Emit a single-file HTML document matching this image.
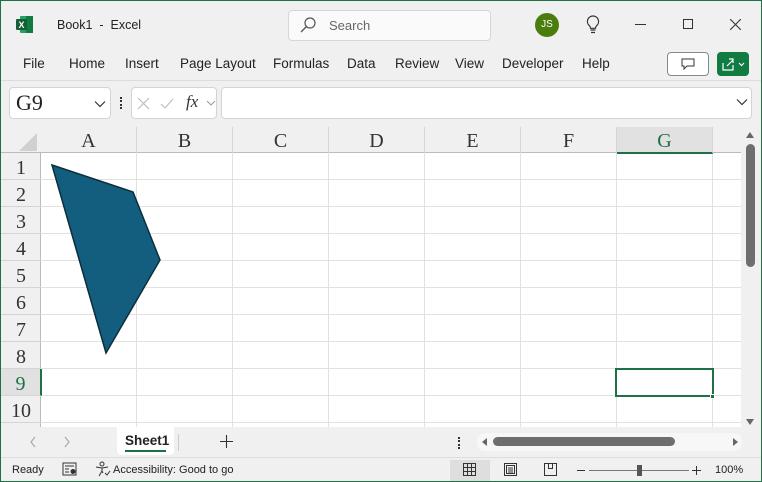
<!DOCTYPE html>
<html><head><meta charset="utf-8"><style>
*{margin:0;padding:0;box-sizing:border-box}
body{width:762px;height:482px;overflow:hidden;background:#f0f0f0;font-family:"Liberation Sans",sans-serif;position:relative}
.a{position:absolute}
.menu span{position:absolute;top:56px;font-size:13.5px;color:#222}
.ch{position:absolute;top:127px;height:26px;width:96px;text-align:center;font:20px "Liberation Serif",serif;color:#333;line-height:28px;border-right:1px solid #d4d4d4}
.rh{position:absolute;left:1px;width:40px;height:27px;text-align:center;font:20px "Liberation Serif",serif;color:#333;line-height:31px;border-bottom:1px solid #d4d4d4}
</style></head><body>
<div class="a" style="left:0;top:0;width:762px;height:482px;border:1px solid #1e7145;z-index:10;pointer-events:none"></div>
<svg class="a" style="left:16px;top:16px" width="18" height="17"><rect x="4" y="0" width="13" height="17" rx="1" fill="#21a366"/><rect x="10" y="0" width="7" height="17" fill="#107c41"/><rect x="0" y="3" width="11" height="11" rx="1" fill="#185c37"/><text x="2.5" y="12" font-size="9" font-weight="bold" fill="#fff" font-family="Liberation Sans">X</text></svg>
<div class="a" style="left:57px;top:18px;font-size:12.5px;color:#222">Book1&nbsp; - &nbsp;Excel</div>
<div class="a" style="left:288px;top:10px;width:203px;height:31px;background:#fafafa;border:1px solid #d6d6d6;border-radius:4px"></div>
<svg class="a" style="left:300px;top:17px" width="16" height="16"><circle cx="10" cy="6" r="5" fill="none" stroke="#555" stroke-width="1.2"/><path d="M6.5 9.5L1 15" stroke="#555" stroke-width="1.3"/></svg>
<div class="a" style="left:329px;top:18px;font-size:13px;color:#666">Search</div>
<div class="a" style="left:535px;top:13px;width:24px;height:24px;border-radius:50%;background:#4a7d0e;color:#fff;font-size:10px;text-align:center;line-height:24px">JS</div>
<svg class="a" style="left:585px;top:15px" width="16" height="20"><path d="M8 1a5.5 5.5 0 0 0-3.5 9.8c.8.8 1 1.5 1 2.5h5c0-1 .2-1.7 1-2.5A5.5 5.5 0 0 0 8 1z" fill="none" stroke="#333" stroke-width="1.2"/><path d="M5.5 15h5M6 17.5h4" stroke="#333" stroke-width="1.2"/></svg>
<div class="a" style="left:635px;top:24px;width:11px;height:1px;background:#333"></div>
<div class="a" style="left:683px;top:19px;width:10px;height:10px;border:1px solid #333"></div>
<svg class="a" style="left:730px;top:19px" width="11" height="11"><path d="M0 0L11 11M11 0L0 11" stroke="#333" stroke-width="1.1"/></svg>
<div class="menu"><span style="left:23px">File</span><span style="left:69px">Home</span><span style="left:125px">Insert</span><span style="left:180px">Page Layout</span><span style="left:273px">Formulas</span><span style="left:347px">Data</span><span style="left:395px">Review</span><span style="left:455px">View</span><span style="left:502px">Developer</span><span style="left:582px">Help</span></div>
<div class="a" style="left:667px;top:52px;width:42px;height:24px;background:#fff;border:1px solid #888;border-radius:4px"></div>
<svg class="a" style="left:681px;top:58px" width="14" height="12"><path d="M1 1h12v7H6l-3 3V8H1z" fill="none" stroke="#333" stroke-width="1"/></svg>
<div class="a" style="left:717px;top:52px;width:32px;height:24px;background:#107c41;border-radius:4px"></div>
<svg class="a" style="left:721px;top:57px" width="26" height="14"><path d="M2 6v7h10V8M6 9l6-6M8 2h4v4" fill="none" stroke="#fff" stroke-width="1.2"/><path d="M18 6l2.5 2.5L23 6" fill="none" stroke="#fff" stroke-width="1.2"/></svg>
<div class="a" style="left:1px;top:80px;width:760px;height:1px;background:#dcdcdc"></div>
<div class="a" style="left:9px;top:87px;width:102px;height:32px;background:#fff;border:1px solid #d4d4d4;border-radius:4px"></div>
<div class="a" style="left:16px;top:90px;font:22px 'Liberation Serif',serif;color:#222">G9</div>
<svg class="a" style="left:94px;top:100px" width="12" height="8"><path d="M1 1.5l5 5 5-5" fill="none" stroke="#333" stroke-width="1.2"/></svg>
<div class="a" style="left:120px;top:97px;width:2px;height:12px;border-left:2px dotted #333"></div>
<div class="a" style="left:131px;top:87px;width:86px;height:32px;background:#fff;border:1px solid #d4d4d4;border-radius:4px"></div>
<svg class="a" style="left:137px;top:97px" width="80" height="14"><path d="M1 1l11 11M12 1L1 12" stroke="#bbb" stroke-width="1.1"/><path d="M24 7l4 4 8-9" fill="none" stroke="#bbb" stroke-width="1.1"/><path d="M70 4l4 4 4-4" fill="none" stroke="#999" stroke-width="1"/></svg>
<div class="a" style="left:186px;top:92px;font:italic 17px 'Liberation Serif',serif;color:#333">fx</div>
<div class="a" style="left:221px;top:87px;width:531px;height:32px;background:#fff;border:1px solid #d4d4d4;border-radius:4px"></div>
<svg class="a" style="left:736px;top:98px" width="12" height="8"><path d="M1 1.5l5 5 5-5" fill="none" stroke="#333" stroke-width="1.2"/></svg>
<div class="a" style="left:1px;top:127px;width:740px;height:300px;background:#fff"></div>
<div class="a" style="left:1px;top:127px;width:740px;height:26px;background:#f0f0f0;border-bottom:1px solid #bbb"></div>
<div class="a" style="left:1px;top:153px;width:40px;height:274px;background:#f0f0f0;border-right:1px solid #bbb"></div>
<svg class="a" style="left:18px;top:132px" width="20" height="20"><path d="M19 1V19H1z" fill="#d0d0d0"/></svg>
<svg class="a" style="left:41px;top:153px" width="700" height="274">
<g stroke="#e1e1e1" stroke-width="1">
<path d="M95.5 0v274M191.5 0v274M287.5 0v274M383.5 0v274M479.5 0v274M575.5 0v274M671.5 0v274"/>
<path d="M0 26.5h700M0 53.5h700M0 80.5h700M0 107.5h700M0 134.5h700M0 161.5h700M0 188.5h700M0 215.5h700M0 242.5h700M0 269.5h700"/>
</g></svg>
<div class="ch" style="left:41px">A</div><div class="ch" style="left:137px">B</div><div class="ch" style="left:233px">C</div><div class="ch" style="left:329px">D</div><div class="ch" style="left:425px">E</div><div class="ch" style="left:521px">F</div><div class="ch" style="left:617px;background:#e1e1e1;color:#1e7145;border-bottom:2px solid #1e7145;height:27px">G</div>
<div class="ch" style="left:713px;width:28px;border:0"></div>
<div class="rh" style="top:153px">1</div><div class="rh" style="top:180px">2</div><div class="rh" style="top:207px">3</div><div class="rh" style="top:234px">4</div><div class="rh" style="top:261px">5</div><div class="rh" style="top:288px">6</div><div class="rh" style="top:315px">7</div><div class="rh" style="top:342px">8</div><div class="rh" style="top:369px;background:#e1e1e1;color:#1e7145;border-right:2px solid #1e7145;width:41px">9</div><div class="rh" style="top:396px">10</div>
<div class="a" style="left:615px;top:368px;width:99px;height:29px;border:2px solid #1e7145"></div>
<div class="a" style="left:710px;top:394px;width:5px;height:5px;background:#1e7145;border:1px solid #fff"></div>
<svg class="a" style="left:0;top:0" width="200" height="400"><polygon points="52,165 133,192 160,260 106,353" fill="#135e7e" stroke="#0c2e3d" stroke-width="1.5"/></svg>
<div class="a" style="left:741px;top:127px;width:20px;height:300px;background:#f0f0f0"></div>
<svg class="a" style="left:745px;top:131px" width="10" height="8"><path d="M1 7L5 1 9 7z" fill="#666"/></svg>
<div class="a" style="left:746px;top:144px;width:9px;height:123px;background:#6e6e6e;border-radius:5px"></div>
<svg class="a" style="left:745px;top:418px" width="10" height="8"><path d="M1 1L5 7 9 1z" fill="#666"/></svg>
<div class="a" style="left:1px;top:427px;width:760px;height:31px;background:#f0f0f0;border-bottom:1px solid #ddd"></div>
<svg class="a" style="left:28px;top:435px" width="45" height="14"><path d="M7 2L3 7l4 5M37 2l4 5-4 5" fill="none" stroke="#aaa" stroke-width="1.2"/></svg>
<div class="a" style="left:117px;top:427px;width:57px;height:28px;background:#fff;border-radius:0 0 4px 4px"></div>
<div class="a" style="left:125px;top:433px;font-size:13.5px;font-weight:bold;color:#222">Sheet1</div>
<div class="a" style="left:125px;top:450px;width:41px;height:2px;background:#1e7145"></div>
<div class="a" style="left:178px;top:434px;width:1px;height:17px;background:#ccc"></div>
<svg class="a" style="left:220px;top:435px" width="13" height="13"><path d="M6.5 0v13M0 6.5h13" stroke="#333" stroke-width="1.1"/></svg>
<div class="a" style="left:458px;top:437px;width:2px;height:12px;border-left:2px dotted #333"></div>
<div class="a" style="left:477px;top:433px;width:265px;height:18px;background:#f7f7f7;border-radius:8px"></div>
<svg class="a" style="left:480px;top:437px" width="260" height="10"><path d="M7 1L2 5l5 4zM253 1l5 4-5 4z" fill="#666"/></svg>
<div class="a" style="left:493px;top:437px;width:182px;height:9px;background:#6e6e6e;border-radius:5px"></div>
<div class="a" style="left:12px;top:464px;font-size:11px;color:#222">Ready</div>
<svg class="a" style="left:62px;top:462px" width="16" height="14"><rect x="1" y="1" width="13" height="12" fill="none" stroke="#333"/><path d="M3 4h9M3 7h4M3 10h4" stroke="#333"/><circle cx="11" cy="9.5" r="2.5" fill="#333"/></svg>
<svg class="a" style="left:95px;top:461px" width="16" height="16"><circle cx="7" cy="3" r="2" fill="none" stroke="#333"/><path d="M1 6l6 1 6-1M7 7v3l-3 5M7 10l1 2M10 12l2 2 3-4" fill="none" stroke="#333"/></svg>
<div class="a" style="left:113px;top:464px;font-size:11px;color:#222">Accessibility: Good to go</div>
<div class="a" style="left:450px;top:460px;width:40px;height:21px;background:#dedede"></div>
<svg class="a" style="left:463px;top:462px" width="110" height="16"><path d="M0.5 1.5h12v12H0.5zM4.5 1.5v12M8.5 1.5v12M0.5 5.5h12M0.5 9.5h12" fill="none" stroke="#333"/><path d="M41.5 1.5h12v12h-12zM43.5 3.5h8v8h-8zM45 6h5M45 8h5M45 10h5" fill="none" stroke="#333"/><path d="M81.5 13.5v-12h12v12zM85.5 1.5v5h4v-5" fill="none" stroke="#333"/></svg>
<div class="a" style="left:577px;top:470px;width:8px;height:1px;background:#333"></div>
<div class="a" style="left:589px;top:470px;width:100px;height:1px;background:#777"></div>
<div class="a" style="left:637px;top:465px;width:5px;height:11px;background:#555"></div>
<svg class="a" style="left:692px;top:466px" width="9" height="9"><path d="M4.5 0v9M0 4.5h9" stroke="#333"/></svg>
<div class="a" style="left:715px;top:464px;font-size:11px;color:#222">100%</div>
</body></html>
